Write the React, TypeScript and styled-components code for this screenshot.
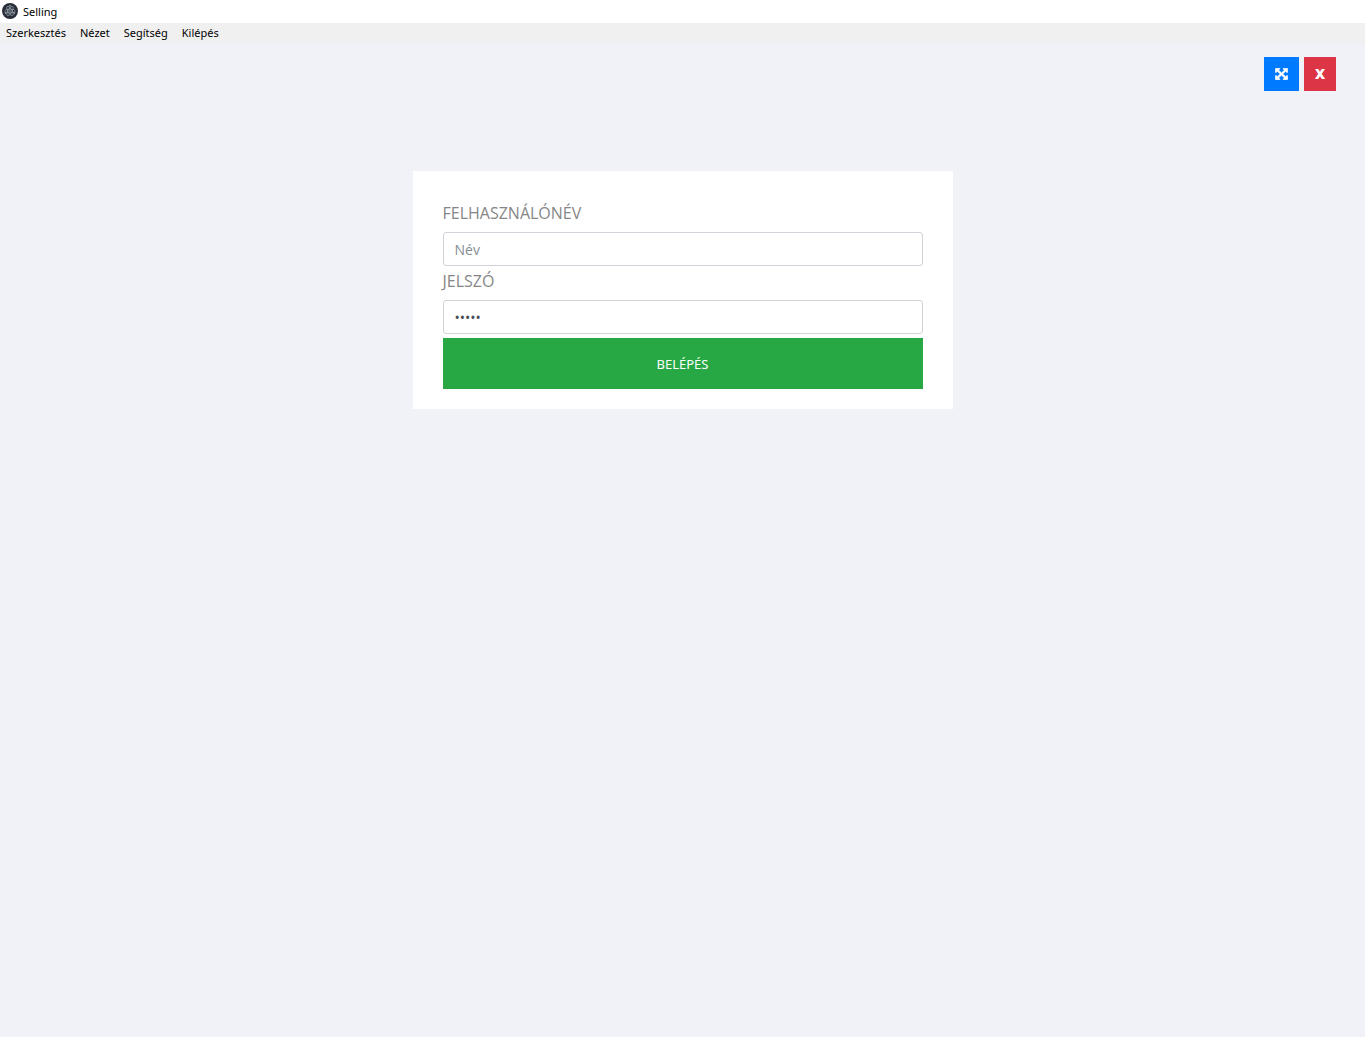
import React, { useState } from "react";
import styled, { createGlobalStyle } from "styled-components";

const GlobalStyle = createGlobalStyle`
  *, *::before, *::after { box-sizing: border-box; }
  body {
    margin: 0;
    background: #f1f2f7;
    color: #868686;
    font-family: "Noto Sans", "Open Sans", sans-serif;
    font-size: 16px;
  }
`;

const Window = styled.div`
  display: flex;
  flex-direction: column;
  min-height: 100vh;
`;

const TitleBar = styled.header`
  display: flex;
  align-items: center;
  gap: 5px;
  height: 23px;
  padding: 0 2px 1px;
  background: #ffffff;
  color: #000000;
  font-size: 11px;
`;

const MenuBar = styled.nav`
  display: flex;
  gap: 14px;
  height: 20px;
  padding-left: 6px;
  background: #f0f0f0;
`;

const MenuItem = styled.button`
  padding: 0;
  border: 0;
  background: none;
  color: #000000;
  font-family: inherit;
  font-size: 11px;
  line-height: 20px;
`;

const Toolbar = styled.div`
  display: flex;
  justify-content: flex-end;
  gap: 5px;
  padding: 14px 29px 0;
`;

const ToolButton = styled.button<{ $color: string }>`
  display: flex;
  align-items: center;
  justify-content: center;
  min-width: 32px;
  height: 34px;
  padding: 0 11px;
  border: 0;
  background: ${(p) => p.$color};
  color: #ffffff;
  font-family: "Open Sans", sans-serif;
  font-size: 14px;
  font-weight: 800;
  line-height: 20px;
`;

const Main = styled.main`
  display: flex;
  justify-content: center;
  padding: 80px 15px 30px;
`;

const Card = styled.form`
  display: flex;
  flex-direction: column;
  gap: 4px;
  width: 100%;
  max-width: 540px;
  padding: 31px 30px 20px;
  background: #ffffff;
`;

const Field = styled.div`
  display: flex;
  flex-direction: column;
  gap: 8px;
`;

const Label = styled.label`
  font-family: "Open Sans", sans-serif;
  line-height: 22px;
  text-transform: uppercase;
`;

const Input = styled.input`
  width: 100%;
  height: 34px;
  padding: 0 11px;
  border: 1px solid #ced4da;
  border-radius: 3px;
  outline: 0;
  background: #ffffff;
  color: #495057;
  font-family: "Open Sans", sans-serif;
  font-size: 14px;
  &::placeholder { color: #868e96; opacity: 1; }
`;

const SubmitButton = styled.button`
  height: 51px;
  border: 0;
  background: #28a745;
  color: #ffffff;
  font-family: inherit;
  font-size: 13px;
  text-transform: uppercase;
`;

const AppLogo = () => (
  <svg width="16" height="16" viewBox="0 0 32 32" aria-hidden="true">
    <circle cx="16" cy="16" r="16" fill="#2b2e3a" />
    <g fill="none" stroke="#a2b4bd" strokeWidth="1.2">
      <ellipse cx="16" cy="16" rx="10.5" ry="4" />
      <ellipse cx="16" cy="16" rx="10.5" ry="4" transform="rotate(60 16 16)" />
      <ellipse cx="16" cy="16" rx="10.5" ry="4" transform="rotate(120 16 16)" />
    </g>
    <g fill="#b9cbd3">
      <circle cx="16" cy="16" r="1.4" />
      <circle cx="7" cy="20" r="1.4" />
      <circle cx="25" cy="20" r="1.4" />
      <circle cx="16" cy="5.5" r="1.4" />
    </g>
  </svg>
);

const ExpandIcon = () => (
  <svg
    width="13"
    height="12"
    viewBox="-40 -40 1616 1616"
    preserveAspectRatio="none"
    fill="currentColor"
    stroke="currentColor"
    strokeWidth="80"
    aria-hidden="true"
  >
    <path d="M1283 413L928 768l355 355 144-144q29-31 70-14 39 17 39 59v448q0 26-19 45t-45 19h-448q-42 0-59-40-17-39 14-69l144-144-355-355-355 355 144 144q31 30 14 69-17 40-59 40H64q-26 0-45-19t-19-45v-448q0-42 40-59 39-17 69 14l144 144 355-355-355-355-144 144q-19 19-45 19-12 0-24-5-40-17-40-59V64q0-26 19-45T64 0h448q42 0 59 40 17 39-14 69L413 253l355 355 355-355-144-144q-31-30-14-69 17-40 59-40h448q26 0 45 19t19 45v448q0 42-39 59-13 5-25 5-26 0-45-19z" />
  </svg>
);

const menu = ["Szerkesztés", "Nézet", "Segítség", "Kilépés"];

export default function App() {
  const [name, setName] = useState("");
  const [password, setPassword] = useState("admin");

  return (
    <Window>
      <GlobalStyle />
      <TitleBar>
        <AppLogo />
        <span>Selling</span>
      </TitleBar>
      <MenuBar>
        {menu.map((item) => (
          <MenuItem key={item} type="button">{item}</MenuItem>
        ))}
      </MenuBar>
      <Toolbar>
        <ToolButton type="button" $color="#007bff" aria-label="Teljes képernyő">
          <ExpandIcon />
        </ToolButton>
        <ToolButton type="button" $color="#dc3545">X</ToolButton>
      </Toolbar>
      <Main>
        <Card onSubmit={(e) => e.preventDefault()}>
          <Field>
            <Label htmlFor="username">Felhasználónév</Label>
            <Input
              id="username"
              placeholder="Név"
              value={name}
              onChange={(e) => setName(e.target.value)}
            />
          </Field>
          <Field>
            <Label htmlFor="password">Jelszó</Label>
            <Input
              id="password"
              type="password"
              value={password}
              onChange={(e) => setPassword(e.target.value)}
            />
          </Field>
          <SubmitButton type="submit">Belépés</SubmitButton>
        </Card>
      </Main>
    </Window>
  );
}
